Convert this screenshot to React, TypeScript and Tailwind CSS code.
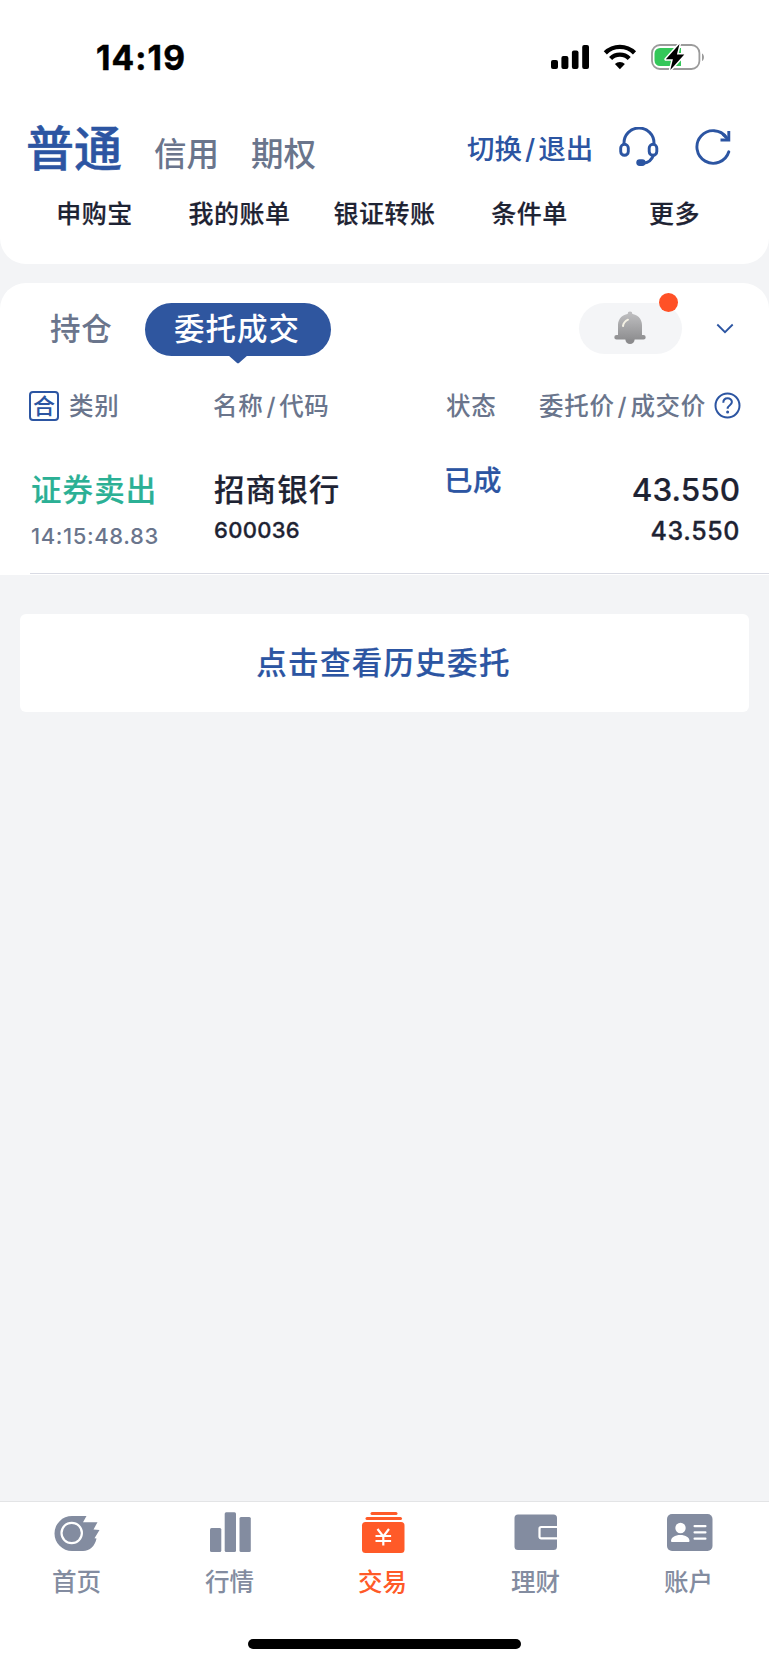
import type { ReactNode } from 'react';

function StatusBar() {
  return (
    <div className="flex h-[115px] items-start pl-[96px]">
      <span className="mt-[42px] w-[455px] text-[33.500px] leading-[33px] font-bold tracking-[1.100px] text-black [-webkit-text-stroke:0.500px_#000]">14:19</span>
      <svg className="mt-[45px]" width="38" height="24" viewBox="0 0 38 24">
        <rect x="0" y="15" width="7" height="9" rx="2" />
        <rect x="10.4" y="11" width="7" height="13" rx="2" />
        <rect x="20.9" y="5.5" width="6.6" height="18.5" rx="2" />
        <rect x="31.2" y="0" width="6.8" height="24" rx="2" />
      </svg>
      <svg className="mt-[44px] ml-[14px]" width="34" height="26" viewBox="0 0 34 26">
        <g fill="none" stroke="#000" strokeWidth="4.4">
          <path d="M2.300 8.900a20.600 20.600 0 0 1 29.200 0" />
          <path d="M7.600 14.500a13.200 13.200 0 0 1 18.600 0" />
        </g>
        <path d="M16.900 25.200l-5-5.100a7.200 7.200 0 0 1 10 0z" />
      </svg>
      <svg className="mt-[42px] ml-[13px]" width="56" height="30" viewBox="0 0 56 30">
        <rect x="2" y="3" width="47.4" height="24" rx="8" fill="none" stroke="#9b9b9b" strokeWidth="1.8" />
        <path d="M52 11.500c2.600 1 2.600 6.500 0 7.500z" fill="#9b9b9b" />
        <path d="M10 6h21v18H10a5.500 5.500 0 0 1-5.500-5.500v-7A5.500 5.500 0 0 1 10 6z" fill="#34c759" />
        <path d="M29.500 2L15.800 17.300h7.100L20.300 28 34.300 12.500h-7.400z" fill="#000" stroke="#fff" strokeWidth="3" strokeLinejoin="round" paintOrder="stroke" />
      </svg>
    </div>
  );
}

function Headset() {
  return (
    <svg width="40" height="40" viewBox="0 0 40 40" fill="none" stroke="#2c55a2" strokeWidth="2.900">
      <path d="M5 17.500V16a15 15 0 0 1 30 0v1.500" />
      <rect x="1.700" y="17.300" width="7.600" height="11" rx="3.800" />
      <rect x="30.200" y="17.300" width="7.600" height="11" rx="3.800" />
      <path d="M34.500 28c-1.500 4.500-5 7.600-10 8.300" />
      <rect x="18.700" y="33.600" width="6.500" height="4" rx="2" fill="#2c55a2" />
    </svg>
  );
}

function Refresh() {
  return (
    <svg width="37" height="38" viewBox="0 0 37 38" fill="none" stroke="#2c55a2" strokeWidth="2.900">
      <path d="M33.800 24.800A16.300 16.300 0 1 1 31.500 10.500" strokeLinecap="round" />
      <path d="M33.800 4v9H25.500" />
      <path d="M28 7.500l5.500 5" />
    </svg>
  );
}

function Header() {
  const links = ['申购宝', '我的账单', '银证转账', '条件单', '更多'];
  return (
    <header className="h-[264px] rounded-b-[26px] bg-white">
      <StatusBar />
      <div className="flex h-[70px] items-start whitespace-nowrap">
        <div className="flex w-[467px] items-start pl-[26px]">
          <span className="mt-px text-[48px] leading-[66px] font-medium text-[#2c55a2] [-webkit-text-stroke:0.500px_#2c55a2]">普通</span>
          <span className="mt-[7px] ml-[32px] text-[32.500px] leading-[66px] font-medium text-[#6a758c]">信用</span>
          <span className="mt-[7px] ml-[32px] text-[32.500px] leading-[66px] font-medium text-[#6a758c]">期权</span>
        </div>
        <span className="mt-[19px] flex w-[152px] gap-[3px] text-[27.500px] leading-[30px] font-medium text-[#2c55a2]">
          <span>切换</span><span>/</span><span>退出</span>
        </span>
        <div className="mt-[12px] flex">
          <Headset />
          <div className="ml-[36px]"><Refresh /></div>
        </div>
      </div>
      <nav className="grid grid-cols-5 px-[22px] text-center text-[25px] leading-[30px] font-medium tracking-[0.500px] text-[#1e2333] [-webkit-text-stroke:0.200px_#1e2333]">
        {links.map((l) => <span key={l} className="mt-[14px]">{l}</span>)}
      </nav>
    </header>
  );
}

function Bell() {
  return (
    <svg width="32" height="34" viewBox="0 0 32 34">
      <defs>
        <linearGradient id="bell" x1="0" y1="0" x2="0" y2="1">
          <stop offset="0" stopColor="#bdbdbf" />
          <stop offset="1" stopColor="#8f8f91" />
        </linearGradient>
      </defs>
      <circle cx="16" cy="28.500" r="4.600" fill="#8b8b8d" />
      <circle cx="16" cy="2.800" r="2.300" fill="#bdbdbf" />
      <path d="M16 2.800C8.500 2.800 4 8 4 14V24H2.500a2.200 2.200 0 0 0 0 4.400h27a2.200 2.200 0 0 0 0-4.400H28V14C28 8 23.500 2.800 16 2.800z" fill="url(#bell)" />
      <path d="M9 15c.5-3 2.300-5 5-6.300" fill="none" stroke="#f4f1e4" strokeWidth="2" strokeLinecap="round" />
    </svg>
  );
}

function Orders() {
  return (
    <section className="h-[292px] rounded-t-[26px] bg-white font-medium whitespace-nowrap">
      <div className="flex h-[92px] items-start pt-[20px]">
        <span className="w-[145px] pl-[50px] text-[30.500px] leading-[52px] tracking-[0.700px] text-[#6a758c]">持仓</span>
        <div className="relative flex h-[53px] w-[186px] justify-center rounded-full bg-[#2f569f] pr-[2px] text-[30.500px] leading-[52px] tracking-[1px] text-white">
          委托成交
          <svg className="absolute top-[52px] left-[83px]" width="20" height="9" viewBox="0 0 20 9"><path d="M0 0h20l-8.500 7.500a2 2 0 0 1-3 0z" fill="#2f569f" /></svg>
        </div>
        <div className="relative ml-[248px] flex h-[51px] w-[103px] justify-center rounded-full bg-[#f4f5f7] pt-[8px] pr-[1px]">
          <Bell />
          <i className="absolute top-[-10px] right-[4px] size-[19px] rounded-full bg-[#ff5126]" />
        </div>
        <svg className="mt-[20px] ml-[34px]" width="18" height="12" viewBox="0 0 18 12" fill="none" stroke="#2c55a2" strokeWidth="1.800"><path d="M1.300 1.500L9 9.200l7.700-7.700" /></svg>
      </div>
      <div className="flex h-[61px] items-center text-[24.500px] leading-[30px] tracking-[0.700px] text-[#6a758c]">
        <span className="ml-[29px] flex size-[30px] items-center justify-center rounded-[4px] border-2 border-[#2c55a2] text-[22px] leading-[22px] tracking-normal text-[#2c55a2]">合</span>
        <span className="ml-[10px] w-[144px]">类别</span>
        <span className="flex w-[233px] gap-[3px]"><span>名称</span><span>/</span><span>代码</span></span>
        <span className="w-[93px]">状态</span>
        <span className="flex w-[175px] gap-[3px]"><span>委托价</span><span>/</span><span>成交价</span></span>
        <svg width="27" height="27" viewBox="0 0 27 27" fill="none" stroke="#2c55a2" strokeWidth="2">
          <circle cx="13.500" cy="13.500" r="12" />
          <path d="M9.300 10.700c0-6 8.600-5.600 8.600-.6 0 3.200-4.300 3-4.300 6.600" />
          <circle cx="13.600" cy="19.900" r="1.500" fill="#2c55a2" stroke="none" />
        </svg>
      </div>
      <div className="ml-[30px] flex h-[138px] border-b border-[#d9dbe4] text-[#1e2333]">
        <div className="w-[184px]">
          <div className="mt-[36px] ml-px text-[30.500px] leading-[36px] tracking-[1.100px] text-[#2bb095] [-webkit-text-stroke:0.200px_#2bb095]">证券卖出</div>
          <div className="mt-[15px] ml-px text-[22px] leading-[26px] tracking-[0.600px] text-[#6a758c]">14:15:48.83</div>
        </div>
        <div className="w-[230px]">
          <div className="mt-[36px] text-[30.500px] leading-[36px] tracking-[1.100px] [-webkit-text-stroke:0.200px_#1e2333]">招商银行</div>
          <div className="mt-[9px] text-[22px] leading-[26px] tracking-[0.300px] [-webkit-text-stroke:0.300px_#1e2333]">600036</div>
        </div>
        <div className="mt-[27px] w-[100px] text-[28.500px] leading-[36px] tracking-[0.500px] text-[#2c55a2] [-webkit-text-stroke:0.200px_#2c55a2]">已成</div>
        <div className="w-[196px] text-right">
          <div className="mt-[36px] text-[31.500px] leading-[36px] [-webkit-text-stroke:0.200px_#1e2333]">43.550</div>
          <div className="mt-[9px] text-[25px] leading-[28px] tracking-[0.600px] [-webkit-text-stroke:0.300px_#1e2333]">43.550</div>
        </div>
      </div>
    </section>
  );
}

function Tab({ label, active, children }: { label: string; active?: boolean; children: ReactNode }) {
  return (
    <div className={active ? 'flex flex-col items-center text-[#ff5a28]' : 'flex flex-col items-center text-[#838ca0]'}>
      <svg width="48" height="44" viewBox="0 0 48 44" fill="currentColor" className="mt-[8px]">{children}</svg>
      <span className="mt-[13px] text-[24.500px] leading-[30px] font-medium">{label}</span>
    </div>
  );
}

function TabBar() {
  return (
    <footer className="relative grid h-[164px] grid-cols-5 border-t border-[#e3e4e6] bg-white pr-[4px]">
      <Tab label="首页">
        <path d="M19 6h14.500L30 12.200h14.500l-4 7.300 6 .5-5 8.200 2 .3C42 36 37 41 30 41H19a17.500 17.500 0 0 1 0-35z" />
        <circle cx="18.700" cy="23" r="10.200" fill="none" stroke="#fff" strokeWidth="2.200" />
      </Tab>
      <Tab label="行情">
        <rect x="4" y="18" width="11.300" height="24" rx="1.500" />
        <rect x="18.700" y="2.300" width="11.300" height="39.700" rx="1.500" />
        <rect x="33.500" y="7" width="11.300" height="35" rx="1.500" />
      </Tab>
      <Tab label="交易" active>
        <rect x="11.500" y="2" width="27" height="3" rx="1.500" />
        <rect x="6.500" y="7" width="36.500" height="3" rx="1.500" />
        <rect x="3" y="12" width="42.500" height="31" rx="3.500" />
        <path d="M18.500 19l5.800 7.500L30 19M24.300 26v9.500M16.500 26h15.600M16.500 31h15.600" fill="none" stroke="#fff" strokeWidth="2.200" />
      </Tab>
      <Tab label="理财">
        <rect x="2.500" y="4.500" width="42.500" height="35.500" rx="3.500" />
        <path d="M45 17H29.200a1.700 1.700 0 0 0-1.700 1.700v8a1.700 1.700 0 0 0 1.700 1.700H45" fill="none" stroke="#fff" strokeWidth="2.200" />
      </Tab>
      <Tab label="账户">
        <rect x="2" y="4" width="45.500" height="37" rx="5" />
        <g fill="#fff">
          <circle cx="15.500" cy="18" r="5.200" />
          <path d="M6 31c0-3.500 4-6 9.300-6s9.200 2.500 9.200 6c0 .5-.5 1-1.200 1H7.200c-.7 0-1.200-.5-1.200-1z" />
          <rect x="28.500" y="15" width="13" height="2.300" rx="1" />
          <rect x="28.500" y="21.200" width="13" height="2.300" rx="1" />
          <rect x="28.500" y="27.400" width="13" height="2.300" rx="1" />
        </g>
      </Tab>
      <i className="absolute bottom-[16px] left-[248px] h-[10px] w-[273px] rounded-full bg-black" />
    </footer>
  );
}

export default function App() {
  return (
    <main className='flex h-[1665px] w-[769px] flex-col overflow-hidden bg-[#f3f4f6] font-["Inter","Noto_Sans_CJK_SC",sans-serif]'>
      <Header />
      <div className="h-[19px] shrink-0" />
      <Orders />
      <button className="mx-[20px] mt-[39px] h-[98px] rounded-[6px] bg-white pr-[2px] text-[30.500px] font-medium tracking-[1.300px] text-[#2c55a2] [-webkit-text-stroke:0.200px_#2c55a2]">点击查看历史委托</button>
      <div className="grow" />
      <TabBar />
    </main>
  );
}
